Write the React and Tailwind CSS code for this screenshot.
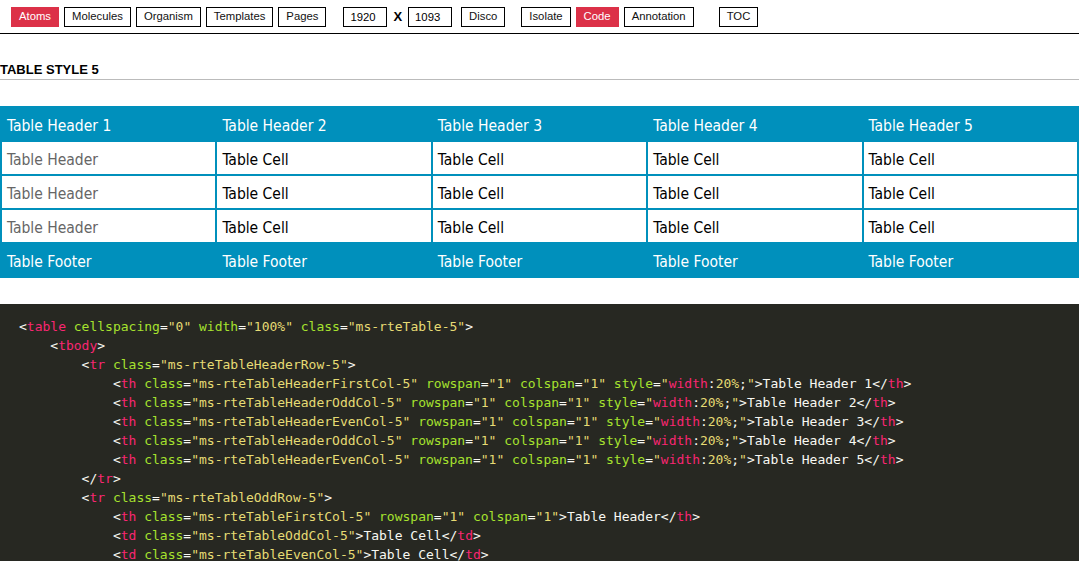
import React from 'react';

const navLeft = ['Atoms', 'Molecules', 'Organism', 'Templates', 'Pages'];

const ToolButton = ({ label, active, className = '' }) => (
  <button
    className={`h-[20px] px-[7px] border text-[11.3px] leading-none ${
      active ? 'bg-[#dc3148] border-[#dc3148] text-white' : 'bg-white border-black text-[#111]'
    } ${className}`}
  >
    {label}
  </button>
);

// syntax pieces
const P = ({ children }) => <span className="text-[#f8f8f2]">{children}</span>;
const Tg = ({ children }) => <span className="text-[#f92672]">{children}</span>;
const At = ({ children }) => <span className="text-[#a6e22e]">{children}</span>;
const Str = ({ children }) => <span className="text-[#e6db74]">{children}</span>;

const Attr = ({ name, value }) => (
  <>
    {' '}
    <At>{name}</At>
    <P>=</P>
    <Str>"{value}"</Str>
  </>
);

const StyleAttr = () => (
  <>
    {' '}
    <At>style</At>
    <P>=</P>
    <Str>"</Str>
    <Tg>width</Tg>
    <P>:</P>
    <Str>20%</Str>
    <P>;</P>
    <Str>"</Str>
  </>
);

const Line = ({ indent = 0, children }) => (
  <div className="whitespace-pre h-[19px]" style={{ paddingLeft: indent * 31.3 }}>
    {children}
  </div>
);

const Open = ({ name, attrs = [], style, content, close }) => (
  <>
    <P>&lt;</P>
    <Tg>{name}</Tg>
    {attrs.map(([n, v]) => (
      <Attr key={n} name={n} value={v} />
    ))}
    {style && <StyleAttr />}
    <P>&gt;</P>
    {content && <P>{content}</P>}
    {close && (
      <>
        <P>&lt;/</P>
        <Tg>{name}</Tg>
        <P>&gt;</P>
      </>
    )}
  </>
);

const Close = ({ name }) => (
  <>
    <P>&lt;/</P>
    <Tg>{name}</Tg>
    <P>&gt;</P>
  </>
);

const headerClasses = ['FirstCol', 'OddCol', 'EvenCol', 'OddCol', 'EvenCol'];

const App = () => {
  const cols = [0, 1, 2, 3, 4];
  const rows = [0, 1, 2];

  return (
    <div className="h-screen overflow-hidden flex flex-col bg-white font-['Liberation_Sans',Arial,sans-serif]">
      {/* toolbar */}
      <div className="h-[34px] shrink-0 border-b border-black flex items-start pl-[11px] pt-[7px]">
        <div className="flex items-center gap-[5px]">
          {navLeft.map((n, i) => (
            <ToolButton key={n} label={n} active={i === 0} />
          ))}
        </div>
        <div className="flex items-center ml-[17px]">
          <div className="w-[44px] h-[20px] border border-black flex items-center pl-[6px] text-[11.3px]">1920</div>
          <span className="mx-[6px] text-[13px] font-bold">X</span>
          <div className="w-[44px] h-[20px] border border-black flex items-center pl-[6px] text-[11.3px]">1093</div>
        </div>
        <ToolButton label="Disco" className="ml-[9px]" />
        <div className="flex items-center gap-[5px] ml-[16px]">
          <ToolButton label="Isolate" />
          <ToolButton label="Code" active />
          <ToolButton label="Annotation" />
        </div>
        <ToolButton label="TOC" className="ml-[25px]" />
      </div>

      {/* heading */}
      <div className="shrink-0 pt-[30px] pb-[3px] border-b border-[#bbbbbb]">
        <h2 className="text-[13px] font-bold leading-[12px] text-black">TABLE STYLE 5</h2>
      </div>

      {/* table */}
      <div className="shrink-0 mt-[26px] bg-[#0090bc] font-['DejaVu_Sans_Condensed','DejaVu_Sans',Verdana,sans-serif] text-[15.5px]">
        <div className="grid grid-cols-5 gap-x-[2px] px-[2px] h-[36px] text-white">
          {cols.map((c) => (
            <div key={c} className="flex items-center pl-[5px] pt-[5px]">Table Header {c + 1}</div>
          ))}
        </div>
        <div className="grid grid-cols-5 gap-[2px] px-[2px]">
          {rows.map((r) =>
            cols.map((c) => (
              <div
                key={`${r}-${c}`}
                className={`h-[32px] bg-white flex items-center pl-[5px] pt-[5px] ${c === 0 ? 'text-[#666]' : 'text-black'}`}
              >
                {c === 0 ? 'Table Header' : 'Table Cell'}
              </div>
            ))
          )}
        </div>
        <div className="grid grid-cols-5 gap-x-[2px] px-[2px] h-[36px] text-white">
          {cols.map((c) => (
            <div key={c} className="flex items-center pl-[5px] pt-[5px]">Table Footer</div>
          ))}
        </div>
      </div>

      {/* code */}
      <div className="flex-1 mt-[26px] bg-[#272822] pt-[13px] pl-[19px] font-['DejaVu_Sans_Mono',monospace] text-[13px] leading-[19px]">
        <Line>
          <Open name="table" attrs={[['cellspacing', '0'], ['width', '100%'], ['class', 'ms-rteTable-5']]} />
        </Line>
        <Line indent={1}>
          <Open name="tbody" />
        </Line>
        <Line indent={2}>
          <Open name="tr" attrs={[['class', 'ms-rteTableHeaderRow-5']]} />
        </Line>
        {headerClasses.map((h, i) => (
          <Line key={i} indent={3}>
            <Open
              name="th"
              attrs={[['class', `ms-rteTableHeader${h}-5`], ['rowspan', '1'], ['colspan', '1']]}
              style
              content={`Table Header ${i + 1}`}
              close
            />
          </Line>
        ))}
        <Line indent={2}>
          <Close name="tr" />
        </Line>
        <Line indent={2}>
          <Open name="tr" attrs={[['class', 'ms-rteTableOddRow-5']]} />
        </Line>
        <Line indent={3}>
          <Open
            name="th"
            attrs={[['class', 'ms-rteTableFirstCol-5'], ['rowspan', '1'], ['colspan', '1']]}
            content="Table Header"
            close
          />
        </Line>
        <Line indent={3}>
          <Open name="td" attrs={[['class', 'ms-rteTableOddCol-5']]} content="Table Cell" close />
        </Line>
        <Line indent={3}>
          <Open name="td" attrs={[['class', 'ms-rteTableEvenCol-5']]} content="Table Cell" close />
        </Line>
        <Line indent={3}>
          <Open name="td" attrs={[['class', 'ms-rteTableOddCol-5']]} content="Table Cell" close />
        </Line>
        <Line indent={3}>
          <Open name="td" attrs={[['class', 'ms-rteTableEvenCol-5']]} content="Table Cell" close />
        </Line>
        <Line indent={2}>
          <Close name="tr" />
        </Line>
      </div>
    </div>
  );
};

export default App;
